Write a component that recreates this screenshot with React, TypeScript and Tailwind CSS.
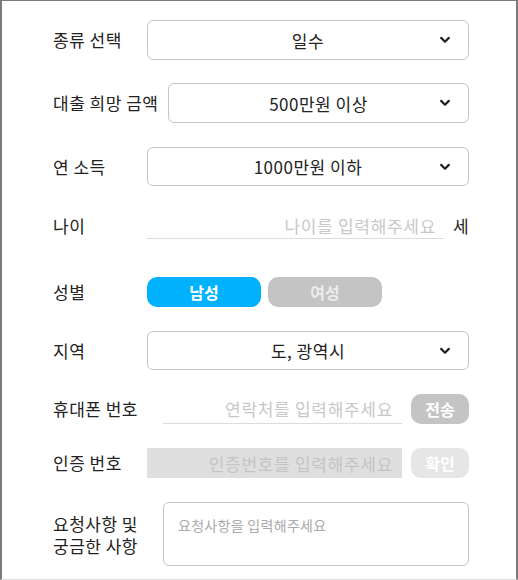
import React from 'react';

const font = { fontFamily: '"Noto Sans CJK KR", "Noto Sans", sans-serif' };

const Chevron = () => (
  <svg width="10" height="7" viewBox="0 0 10 7" className="absolute right-[18px] top-1/2 -translate-y-1/2">
    <path d="M1.2 1.4 L5 5.2 L8.8 1.4" fill="none" stroke="#222" strokeWidth="2.2" strokeLinecap="round" strokeLinejoin="round" />
  </svg>
);

const Select: React.FC<{ value: string }> = ({ value }) => (
  <div className="relative flex-1 h-full flex items-center justify-center border border-[#c6c6c6] rounded-[6px] bg-white text-[17px] tracking-[0.5px] text-[#222]">
    <span className="leading-none">{value}</span>
    <Chevron />
  </div>
);

const Label: React.FC<{ w: string; children: React.ReactNode }> = ({ w, children }) => (
  <div className={`${w} shrink-0 whitespace-nowrap text-[17px] tracking-[0.5px] text-[#222] leading-[22px]`}>{children}</div>
);

export default function App() {
  return (
    <div
      style={font}
      className="w-[518px] h-[580px] bg-white border-t border-l-2 border-r-2 border-b border-[#7a7a7a] border-b-[#dcdcdc] pt-[19px] pl-[51px]"
    >
      <div className="w-[416px] flex flex-col">
        <div className="flex items-center h-[40px]">
          <Label w="w-[94px]">종류 선택</Label>
          <Select value="일수" />
        </div>

        <div className="flex items-center h-[40px] mt-[23px]">
          <Label w="w-[115px]">대출 희망 금액</Label>
          <Select value="500만원 이상" />
        </div>

        <div className="flex items-center h-[39px] mt-[24px]">
          <Label w="w-[94px]">연 소득</Label>
          <Select value="1000만원 이하" />
        </div>

        <div className="flex items-center h-[27px] mt-[26px]">
          <Label w="w-[94px]">나이</Label>
          <div className="w-[297px] h-full border-b border-[#dcdcdc] flex items-center justify-end pr-[8px] text-[17px] tracking-[0.7px] text-[#c8c8c8] leading-none">
            나이를 입력해주세요
          </div>
          <div className="ml-[9px] text-[17px] text-[#222] leading-none">세</div>
        </div>

        <div className="flex items-center h-[30px] mt-[38px]">
          <Label w="w-[94px]">성별</Label>
          <div className="flex gap-[7px] h-full">
            <button className="w-[114px] h-full rounded-[10px] bg-[#00b2fd] text-white font-bold text-[16px] leading-none">남성</button>
            <button className="w-[114px] h-full rounded-[10px] bg-[#c4c4c4] text-[#ececec] font-bold text-[16px] leading-none">여성</button>
          </div>
        </div>

        <div className="flex items-center h-[39px] mt-[24px]">
          <Label w="w-[94px]">지역</Label>
          <Select value="도, 광역시" />
        </div>

        <div className="flex items-center h-[30px] mt-[24px]">
          <Label w="w-[110px]">휴대폰 번호</Label>
          <div className="w-[239px] h-full border-b border-[#dcdcdc] flex items-center justify-end pr-[9px] text-[17px] tracking-[0.7px] text-[#c8c8c8] leading-none">
            연락처를 입력해주세요
          </div>
          <button className="ml-[9px] w-[58px] h-full rounded-[10px] bg-[#c4c4c4] text-white font-bold text-[16px] leading-none">전송</button>
        </div>

        <div className="flex items-center h-[30px] mt-[24px]">
          <Label w="w-[94px]">인증 번호</Label>
          <div className="w-[255px] h-full bg-[#dfdfdf] flex items-center justify-end pr-[9px] text-[17px] tracking-[0.7px] text-[#c4c4c4] leading-none">
            인증번호를 입력해주세요
          </div>
          <button className="ml-[9px] w-[58px] h-full rounded-[10px] bg-[#e6e6e6] text-white font-bold text-[16px] leading-none">확인</button>
        </div>

        <div className="flex items-center h-[64px] mt-[24px]">
          <div className="w-[110px] shrink-0 flex flex-col gap-[5px] text-[17px] tracking-[0.5px] text-[#222] leading-none whitespace-nowrap">
            <div>요청사항 및</div>
            <div>궁금한 사항</div>
          </div>
          <div className="flex-1 h-full border border-[#c6c6c6] rounded-[6px] pl-[14px] pt-[13px] text-[14px] tracking-[0.3px] text-[#aaaaaa] leading-[18px]">
            요청사항을 입력해주세요
          </div>
        </div>
      </div>
    </div>
  );
}
